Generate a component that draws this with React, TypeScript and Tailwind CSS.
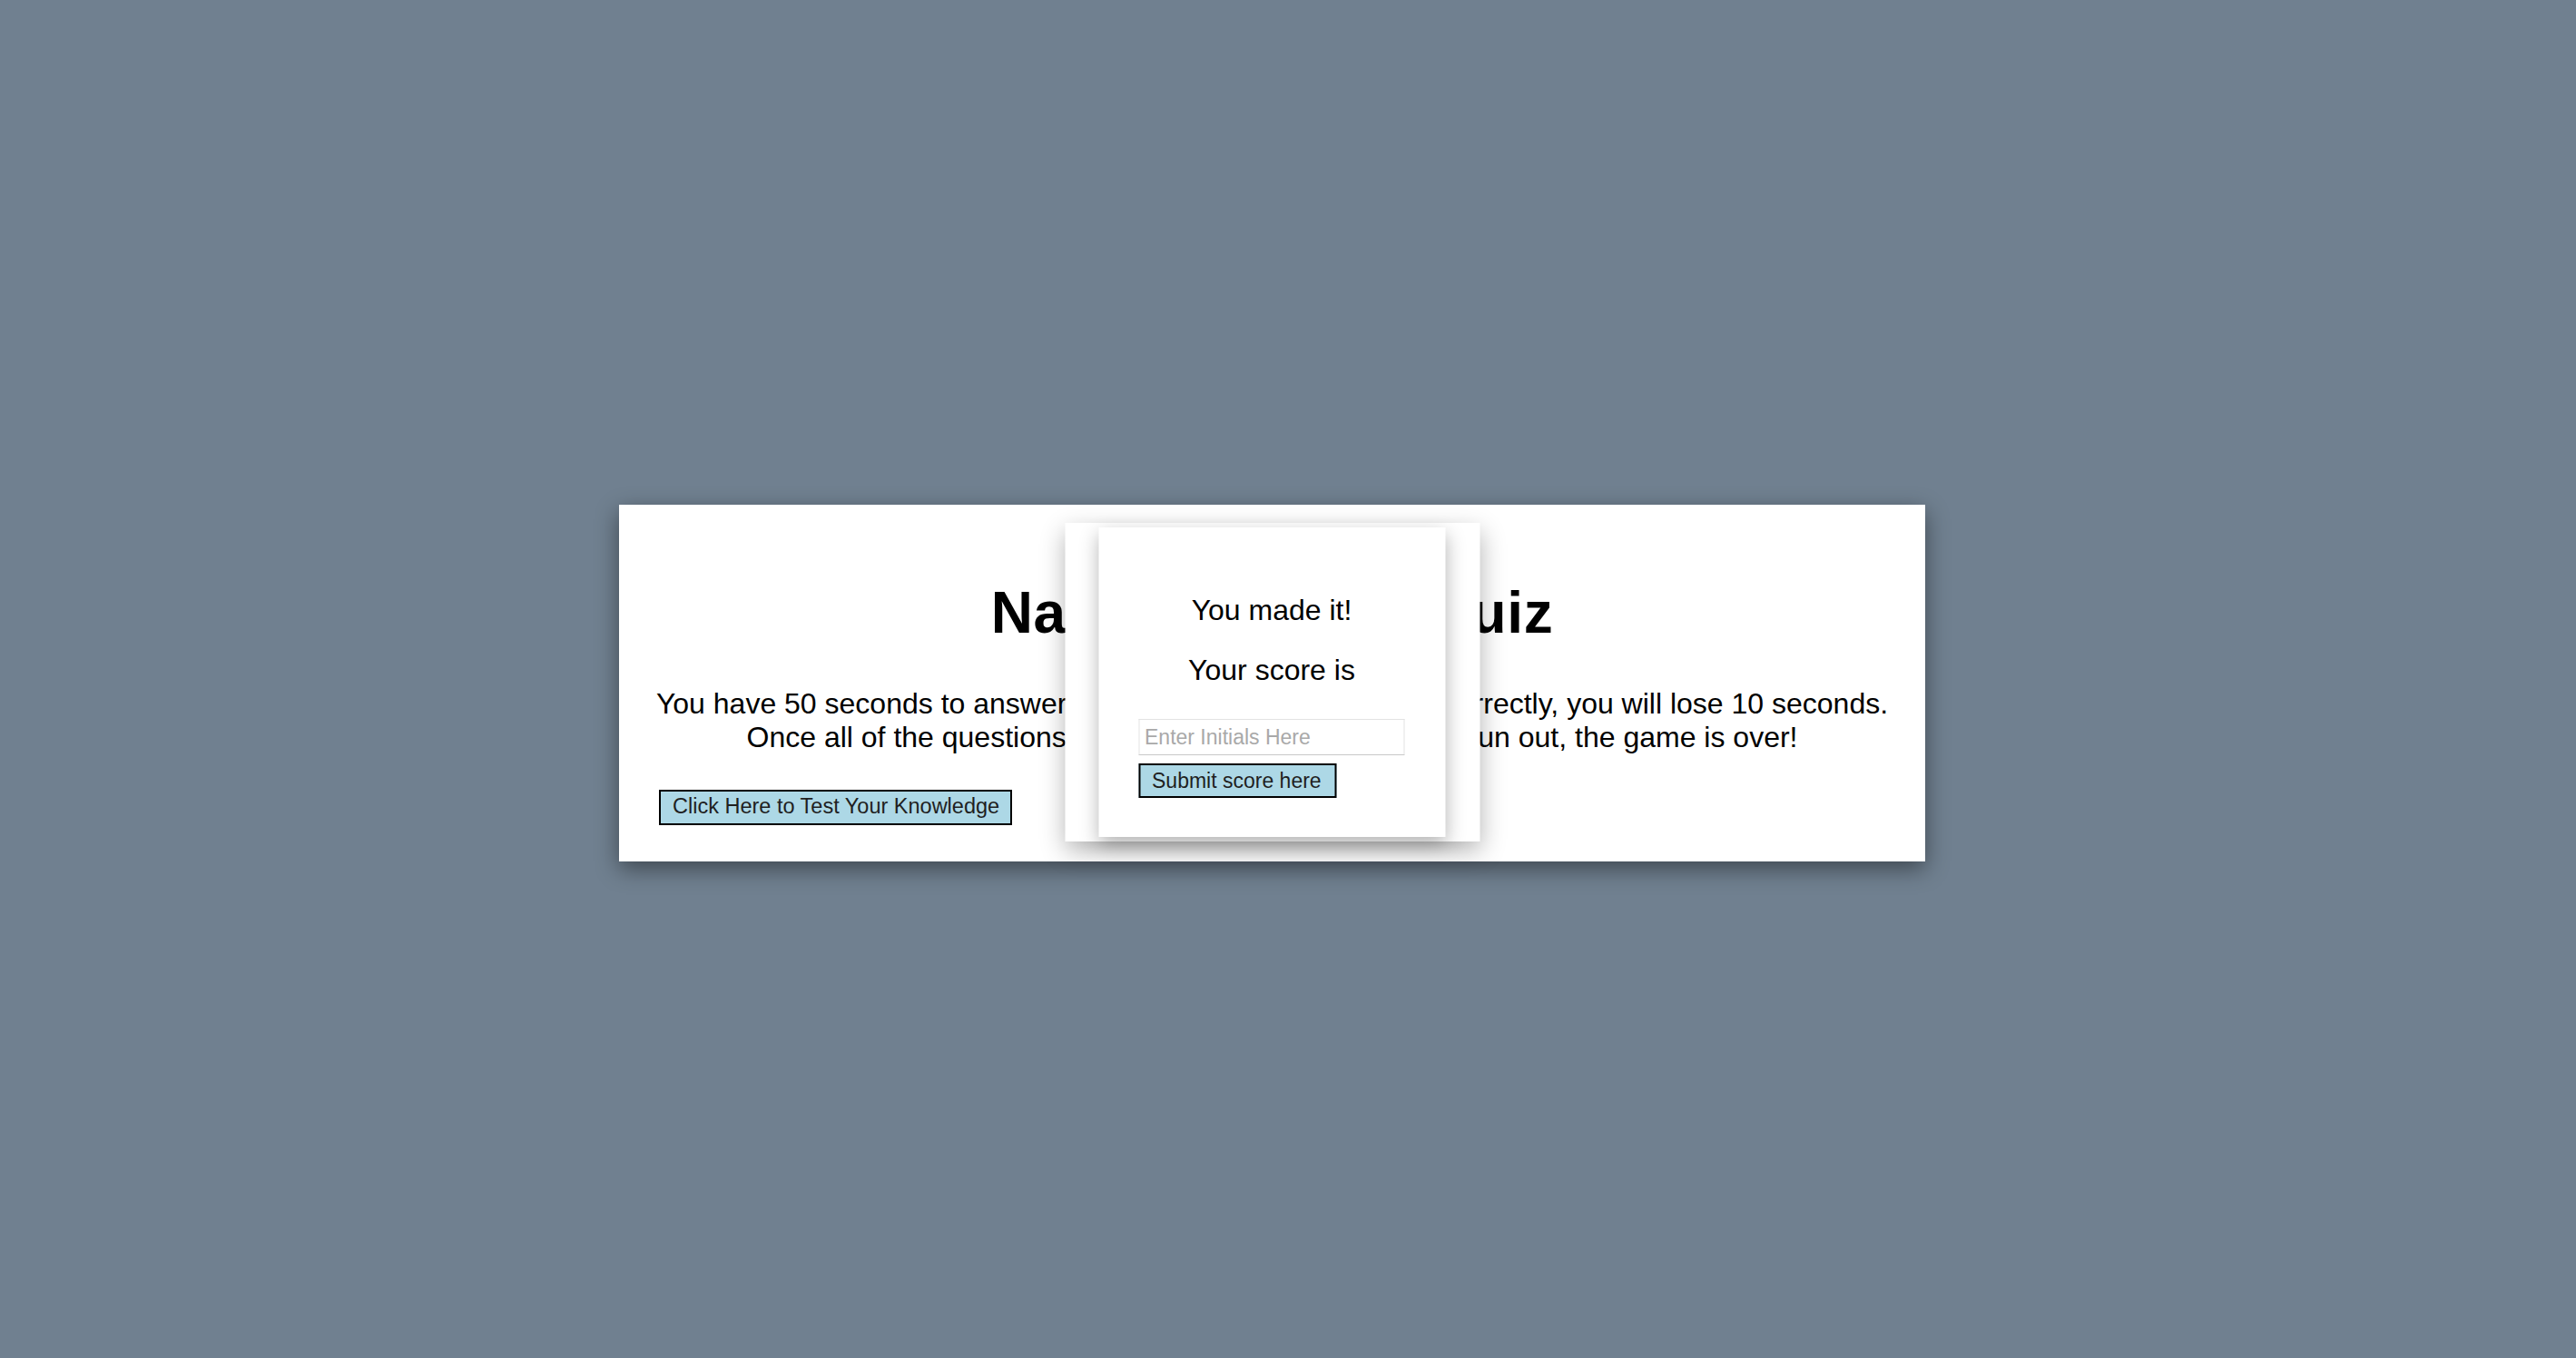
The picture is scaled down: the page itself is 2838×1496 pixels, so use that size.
export default function App() {
    return (
        <div className="min-h-screen w-full bg-[#708090] flex items-center justify-center pt-[9px] pr-[35px] font-['Liberation_Sans',Arial,sans-serif] text-black">
            <div className="relative w-[1439px] bg-white pt-[83px] pb-[40px] shadow-[0_8px_24px_rgba(0,0,0,0.45)]">
                <h1 className="text-center text-[64px] font-bold leading-[1.15] tracking-[0.6px]">National Music Quiz</h1>
                <p className="mt-[44px] px-[20px] text-center text-[32px] leading-[1.15]">
                    You have 50 seconds to answer 5 questions. If you answer incorrectly, you will lose 10 seconds. Once all of the questions are answered or the timer has run out, the game is over!
                </p>
                <button className="mt-[39px] ml-[44px] block h-[39px] w-[389px] whitespace-nowrap border-2 border-black bg-[#add8e6] px-[13px] text-left text-[23.5px] leading-none text-[#1f1f1f]">
                    Click Here to Test Your Knowledge
                </button>

                {/* score modal */}
                <div className="absolute left-1/2 top-[20px] -translate-x-1/2 w-[457px] bg-white px-[37px] py-[5px] shadow-[0_10px_26px_rgba(0,0,0,0.3)]">
                    <div className="h-[341px] w-[382px] bg-white pt-[73px] pl-[44px] shadow-[0_8px_20px_rgba(0,0,0,0.3)]">
                        <p className="-ml-[44px] text-center text-[32px] leading-[1.15]">You made it!</p>
                        <p className="-ml-[44px] mt-[29px] text-center text-[32px] leading-[1.15]">Your score is</p>
                        <input
                            type="text"
                            placeholder="Enter Initials Here"
                            className="mt-[35px] block h-[40px] w-[293px] border border-[#e3e3e3] border-b-[#c8c8c8] px-[6px] text-[23px] outline-none placeholder:text-[#a9a9a9]"
                        />
                        <button className="mt-[9px] block h-[38px] w-[218px] whitespace-nowrap border-2 border-black bg-[#add8e6] px-[13px] text-left text-[23px] leading-none text-[#1f1f1f]">
                            Submit score here
                        </button>
                    </div>
                </div>
            </div>
        </div>
    );
}
